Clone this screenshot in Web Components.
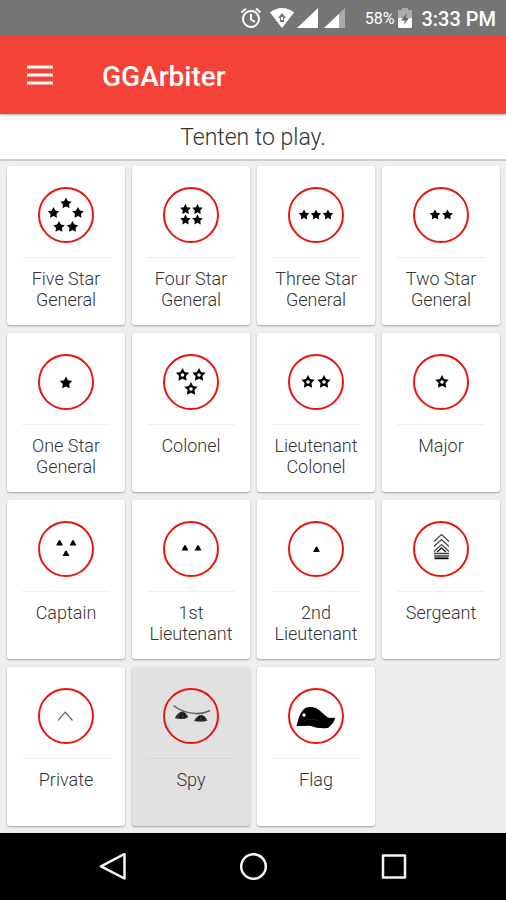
<!DOCTYPE html>
<html lang="en">
<head>
<meta charset="utf-8">
<meta name="viewport" content="width=device-width, initial-scale=1">
<title>GGArbiter</title>
<style>
    body {
        margin: 0;
        font-family: Roboto, "Liberation Sans", sans-serif;
        background: #eee;
    }
</style>
</head>
<body>
<arbiter-app></arbiter-app>

<script>
// five pointed star, hollow when a hole size is given
function star(x, y, r, hole) {
    const points = [];
    for (let i = 0; i < 10; i++) {
        const size = i % 2 ? r * 0.52 : r;
        const angle = Math.PI * i / 5 - Math.PI / 2;
        points.push((x + size * Math.cos(angle)).toFixed(2) + ',' + (y + size * Math.sin(angle)).toFixed(2));
    }
    const dot = hole ? `<circle cx="${x}" cy="${y}" r="${hole}" fill="#fff"/>` : '';
    return `<polygon points="${points.join(' ')}"/>${dot}`;
}

function triangle(x, y) {
    return `<path d="M${x - 3.4} ${y + 2.5}L${x - 0.7} ${y - 2.7}h1.4L${x + 3.4} ${y + 2.5}z"/>`;
}

const INSIGNIA = {
    five: star(0, -11.5, 6) + star(-12.5, -2, 6) + star(12, -2, 6) + star(-7, 12, 6) + star(6.5, 12, 6),
    four: star(-5.5, -5.5, 5.5) + star(6.5, -5.5, 5.5) + star(-5.5, 5, 5.5) + star(6.5, 5, 5.5),
    three: star(-12, 0, 5.5) + star(0, 0, 5.5) + star(12, 0, 5.5),
    two: star(-6, 0, 5.5) + star(6.5, 0, 5.5),
    one: star(0, 1, 6.5),
    colonel: star(-8.5, -7, 7, 1.8) + star(8, -7, 7, 1.8) + star(0, 7, 7, 1.8),
    ltcolonel: star(-8, 0, 7, 1.8) + star(8, 0, 7, 1.8),
    major: star(1, 0, 7, 1.8),
    captain: triangle(-6.5, -6) + triangle(7, -6) + triangle(0, 4.5),
    first: triangle(-6, -1) + triangle(7, -1),
    second: triangle(0.5, 0.5),
    sergeant: `<path d="M-7-7.500L.5-14.500L8-7.500M-7-2.500L.5-9.500L8-2.500M-7 2.500L.5-4.500L8 2.500" fill="none" stroke="#444" stroke-width="1.200"/>
        <path d="M-4 3L.5-1L5 3" fill="none" stroke="#222" stroke-width="1.500"/>
        <path d="M-7 4.500H8M-7 7H8" stroke="#444" stroke-width="1.500"/>
        <path d="M-6.500 9.300H7.500" stroke="#000" stroke-width="1.800"/>`,
    private: `<path d="M-8 4.500L-.8-3.800L6.500 4.500" fill="none" stroke="#666" stroke-width="1.200"/>`,
    spy: `<path d="M-17.500-10.500C-11-5-4-3 4-2.500C9-2 14-3 19-5.500" fill="none" stroke="#666" stroke-width="1.600"/>
        <path d="M-16 2.300C-15-1-12-4.500-8-4.500C-5-3-3-1-3 1.500C-7 3.500-12 3.300-16 2.300z" fill="#333"/>
        <path d="M3 5C5 1 8-1.500 11-1C14 0 16 3 16.500 4.800C12 6 7 6 3 5z" fill="#333"/>
        <path d="M-9-3L-11 2M-7-3L-6 2M9 0L7 4.500M11 0L13 4.500" stroke="#111" stroke-width="1.500"/>`,
    flag: `<path d="M-19.500 9.800C-18 5-16.500-2-13-6C-10-10-5-9.500 0-8C4-6 8-1 12 1.500C14 2.500 17 1.500 19 2C18.500 4 18 6 16 8C14 10 13 12 11 12C6 12.500 0 12-5 10C-10 9-14 10.500-19.500 9.800z"/>
        <circle cx="-12" cy="-1" r="1.700" fill="#fff"/>
        <path d="M-14 6C-10 3-3 2 2 5" fill="none" stroke="#222" stroke-width="1"/>`
};

class StatusBar extends HTMLElement {
    connectedCallback() {
        this.attachShadow({ mode: 'open' });
        this.shadowRoot.innerHTML = `
            <style>
                :host {
                    display: flex;
                    align-items: center;
                    justify-content: flex-end;
                    height: 36px;
                    padding-right: 10px;
                    background: #757575;
                    color: #fff;
                }
                svg { display: block; fill: #fff; }
                .wifi { margin-left: 8px; }
                .signal { margin-left: 3px; }
                .weak { margin-left: 6px; }
                .percent { margin-left: 20px; font-size: 16px; line-height: 20px; padding-top: 2px; }
                .battery { margin-left: 4px; }
                time { margin-left: 9px; font-size: 20px; font-weight: 500; line-height: 20px; padding-top: 2px; }
            </style>
            <svg width="22" height="22" viewBox="0 0 22 22">
                <circle cx="11" cy="12" r="8" fill="none" stroke="#fff" stroke-width="2"/>
                <path d="M11 7v5.500l4 2.500M1.500 5.500L6 1.500M20.500 5.500L16 1.500" fill="none" stroke="#fff" stroke-width="2"/>
            </svg>
            <svg class="wifi" width="24" height="20" viewBox="0 0 24 20">
                <path d="M0 4.500C7-1.500 17-1.500 24 4.500L12 20z"/>
                <path d="M12 5l4 5h-2v4h-4v-4H8z" fill="#757575"/>
                <path d="M11 9h2v3h-2z"/>
            </svg>
            <svg class="signal" width="21" height="20" viewBox="0 0 21 20"><path d="M21 0v20H0z"/></svg>
            <svg class="weak" width="21" height="20" viewBox="0 0 21 20">
                <path d="M21 0v20H0z" opacity=".4"/><path d="M15 6v14H0z"/>
            </svg>
            <span class="percent">58%</span>
            <svg class="battery" width="14" height="20" viewBox="0 0 14 20">
                <path d="M4 0h6v2h4v9H0V2h4z" opacity=".4"/>
                <path d="M0 10h14v9l-1 1H1l-1-1z"/>
                <path d="M9 5L3 12.500h4L5.500 17L11 10H7.500z" fill="#666"/>
            </svg>
            <time>3:33 PM</time>
        `;
    }
}

class AppHeader extends HTMLElement {
    connectedCallback() {
        this.attachShadow({ mode: 'open' });
        this.shadowRoot.innerHTML = `
            <style>
                :host {
                    position: relative;
                    display: flex;
                    align-items: center;
                    height: 78px;
                    padding: 0 27px;
                    gap: 49px;
                    background: #f44336;
                    color: #fff;
                    box-shadow: 0 1px 2px rgba(0, 0, 0, .35);
                }
                button { padding: 0; border: 0; background: none; color: inherit; }
                svg { display: block; }
                h1 { margin: 0; font-size: 28px; font-weight: 500; line-height: 34px; padding-top: 4px; }
            </style>
            <button aria-label="Menu">
                <svg width="26" height="20" viewBox="0 0 26 20"><path d="M0 2h26M0 10h26M0 18h26" stroke="#fff" stroke-width="3"/></svg>
            </button>
            <h1><slot></slot></h1>
        `;
    }
}

class TurnBanner extends HTMLElement {
    connectedCallback() {
        this.attachShadow({ mode: 'open' });
        this.shadowRoot.innerHTML = `
            <style>
                :host {
                    display: block;
                    padding: 10px 0 7px;
                    border-bottom: 2px solid #ccc;
                    background: #fff;
                    color: #333;
                    font-size: 23px;
                    font-weight: 300;
                    line-height: 28px;
                    text-align: center;
                }
            </style>
            <slot></slot>
        `;
    }
}

class RankCard extends HTMLElement {
    connectedCallback() {
        this.attachShadow({ mode: 'open' });
        this.shadowRoot.innerHTML = `
            <style>
                :host { display: grid; }
                button {
                    display: flex;
                    flex-direction: column;
                    align-items: center;
                    height: 159px;
                    padding: 21px 0 0;
                    border: 0;
                    border-radius: 3px;
                    background: #fff;
                    box-shadow: 0 1px 2px rgba(0, 0, 0, .32);
                    color: #333;
                    font: 300 18px/21px Roboto, "Liberation Sans", sans-serif;
                }
                :host([selected]) button { background: #e1e1e1; }
                svg { display: block; flex: none; }
                .label {
                    align-self: stretch;
                    margin: 14px 15px 0;
                    padding-top: 10px;
                    border-top: 1px solid #efefef;
                }
                :host([selected]) .label { border-color: #d6d6d6; }
            </style>
            <button>
                <svg width="56" height="56" viewBox="-28 -28 56 56">
                    <circle r="27" fill="none" stroke="#e8160c" stroke-width="2"/>
                    ${INSIGNIA[this.getAttribute('icon')]}
                </svg>
                <span class="label"><slot></slot></span>
            </button>
        `;
    }
}

class NavBar extends HTMLElement {
    connectedCallback() {
        this.attachShadow({ mode: 'open' });
        this.shadowRoot.innerHTML = `
            <style>
                :host {
                    display: flex;
                    align-items: center;
                    justify-content: center;
                    gap: 112px;
                    height: 67px;
                    background: #000;
                }
                button { padding: 0; border: 0; background: none; }
                svg { display: block; fill: none; stroke: #f5f5f5; stroke-width: 2.5; stroke-linejoin: round; }
            </style>
            <button aria-label="Back"><svg width="28" height="28" viewBox="0 0 28 28"><path d="M25.500 1v24.500L2 13.300z"/></svg></button>
            <button aria-label="Home"><svg width="28" height="28" viewBox="0 0 28 28"><circle cx="14.500" cy="13.500" r="12.300"/></svg></button>
            <button aria-label="Recent apps"><svg width="28" height="28" viewBox="0 0 28 28"><path d="M4 2.500h22v22h-22z"/></svg></button>
        `;
    }
}

class ArbiterApp extends HTMLElement {
    connectedCallback() {
        this.attachShadow({ mode: 'open' });
        this.shadowRoot.innerHTML = `
            <style>
                :host { display: flex; flex-direction: column; min-height: 100vh; }
                main { flex: 1; }
                .ranks {
                    display: grid;
                    grid-template-columns: repeat(4, minmax(0, 1fr));
                    gap: 8px 7px;
                    padding: 5px 6px 7px 7px;
                }
            </style>
            <status-bar></status-bar>
            <app-header>GGArbiter</app-header>
            <main>
                <turn-banner>Tenten to play.</turn-banner>
                <div class="ranks">
                    <rank-card icon="five">Five Star General</rank-card>
                    <rank-card icon="four">Four Star General</rank-card>
                    <rank-card icon="three">Three Star General</rank-card>
                    <rank-card icon="two">Two Star General</rank-card>
                    <rank-card icon="one">One Star General</rank-card>
                    <rank-card icon="colonel">Colonel</rank-card>
                    <rank-card icon="ltcolonel">Lieutenant Colonel</rank-card>
                    <rank-card icon="major">Major</rank-card>
                    <rank-card icon="captain">Captain</rank-card>
                    <rank-card icon="first">1st Lieutenant</rank-card>
                    <rank-card icon="second">2nd Lieutenant</rank-card>
                    <rank-card icon="sergeant">Sergeant</rank-card>
                    <rank-card icon="private">Private</rank-card>
                    <rank-card icon="spy" selected>Spy</rank-card>
                    <rank-card icon="flag">Flag</rank-card>
                </div>
            </main>
            <nav-bar></nav-bar>
        `;
    }
}

customElements.define('status-bar', StatusBar);
customElements.define('app-header', AppHeader);
customElements.define('turn-banner', TurnBanner);
customElements.define('rank-card', RankCard);
customElements.define('nav-bar', NavBar);
customElements.define('arbiter-app', ArbiterApp);
</script>
</body>
</html>
